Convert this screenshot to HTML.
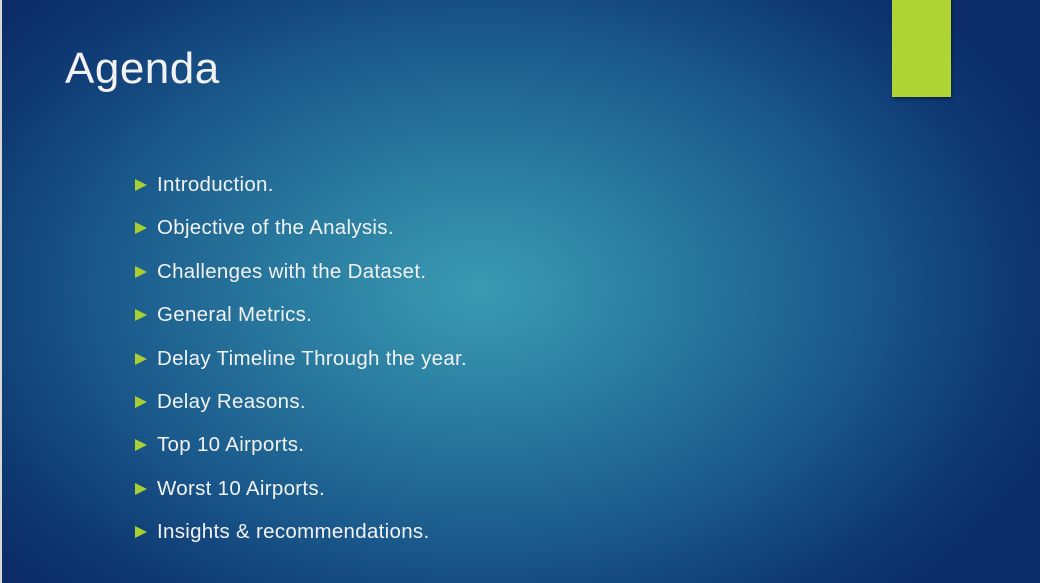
<!DOCTYPE html>
<html><head><meta charset="utf-8"><style>
html,body{margin:0;padding:0}
body{width:1040px;height:583px;overflow:hidden;position:relative;font-family:"Liberation Sans",sans-serif;
background:radial-gradient(ellipse 620px 420px at 480px 290px,#3a9bb2 0%,#2a7ca0 30%,#1b5a8c 60%,#0f3a74 85%,#0b2c68 100%);}
.edge{position:absolute;left:0;top:0;width:2px;height:583px;background:#d8d8d8}
.green{position:absolute;left:892px;top:0;width:59px;height:97px;background:#afd535;box-shadow:1px 2px 3px rgba(0,0,0,.4)}
h1{position:absolute;left:65px;top:44px;margin:0;font-weight:normal;font-size:44px;color:#f2f2f2;letter-spacing:0.5px}
ul{position:absolute;left:134px;top:171px;margin:0;padding:0;list-style:none}
li{height:43.4px;font-size:20.5px;letter-spacing:0.3px;color:#f2f2f2;position:relative;padding-left:23px;line-height:28px}
li:before{content:"";position:absolute;left:1px;top:8px;border-left:12px solid #a8d030;border-top:6px solid transparent;border-bottom:6px solid transparent}
</style></head><body>
<div class="edge"></div>
<div class="green"></div>
<h1>Agenda</h1>
<ul>
<li>Introduction.</li>
<li>Objective of the Analysis.</li>
<li>Challenges with the Dataset.</li>
<li>General Metrics.</li>
<li>Delay Timeline Through the year.</li>
<li>Delay Reasons.</li>
<li>Top 10 Airports.</li>
<li>Worst 10 Airports.</li>
<li>Insights &amp; recommendations.</li>
</ul>
</body></html>
